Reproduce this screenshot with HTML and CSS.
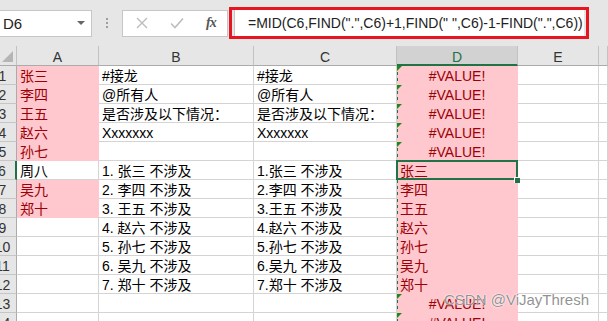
FILE: index.html
```html
<!DOCTYPE html>
<html lang="zh">
	<head>
		<meta charset="utf-8">
		<title>Excel - MID FIND</title>
		<link rel="stylesheet" href="styles.css">
	</head>
	<body>

		<!-- formula bar -->
		<div class="bar">
			<div class="namebox">
				<span>D6</span>
				<span class="caret"></span>
			</div>
			<div class="grip"><i></i><i></i><i></i></div>
			<div class="btns">
				<svg width="12" height="12" viewBox="0 0 12 12"><path d="M1 1L11 11M11 1L1 11" stroke="#bdbdbd" stroke-width="1.4" fill="none"/></svg>
				<svg width="14" height="12" viewBox="0 0 14 12"><path d="M1 6.5L5 10.5L13 1.5" stroke="#bdbdbd" stroke-width="1.6" fill="none"/></svg>
				<span class="fx">fx</span>
			</div>
			<div class="formula">
				<div class="formula-in">=MID(C6,FIND(".",C6)+1,FIND(" ",C6)-1-FIND(".",C6))</div>
			</div>
		</div>

		<!-- sheet -->
		<div class="sheet">
			<div class="hd corner"></div>
			<div class="hd">A</div>
			<div class="hd">B</div>
			<div class="hd">C</div>
			<div class="hd on">D</div>
			<div class="hd">E</div>
			<div class="hd"></div>

			<div class="rh">1</div><div class="c bad">张三</div><div class="c">#接龙</div><div class="c">#接龙</div><div class="c d err">#VALUE!</div><div class="c"></div><div class="c"></div>
			<div class="rh">2</div><div class="c bad">李四</div><div class="c">@所有人</div><div class="c">@所有人</div><div class="c d err">#VALUE!</div><div class="c"></div><div class="c"></div>
			<div class="rh">3</div><div class="c bad">王五</div><div class="c">是否涉及以下情况：</div><div class="c">是否涉及以下情况：</div><div class="c d err">#VALUE!</div><div class="c"></div><div class="c"></div>
			<div class="rh">4</div><div class="c bad">赵六</div><div class="c">Xxxxxxx</div><div class="c">Xxxxxxx</div><div class="c d err">#VALUE!</div><div class="c"></div><div class="c"></div>
			<div class="rh">5</div><div class="c bad">孙七</div><div class="c"></div><div class="c"></div><div class="c d err">#VALUE!</div><div class="c"></div><div class="c"></div>
			<div class="rh sel-row">6</div><div class="c">周八</div><div class="c">1. 张三 不涉及</div><div class="c">1.张三 不涉及</div><div class="c d sel">张三</div><div class="c"></div><div class="c"></div>
			<div class="rh">7</div><div class="c bad">吴九</div><div class="c">2. 李四 不涉及</div><div class="c">2.李四 不涉及</div><div class="c d">李四</div><div class="c"></div><div class="c"></div>
			<div class="rh">8</div><div class="c bad">郑十</div><div class="c">3. 王五 不涉及</div><div class="c">3.王五 不涉及</div><div class="c d">王五</div><div class="c"></div><div class="c"></div>
			<div class="rh">9</div><div class="c"></div><div class="c">4. 赵六 不涉及</div><div class="c">4.赵六 不涉及</div><div class="c d">赵六</div><div class="c"></div><div class="c"></div>
			<div class="rh">10</div><div class="c"></div><div class="c">5. 孙七 不涉及</div><div class="c">5.孙七 不涉及</div><div class="c d">孙七</div><div class="c"></div><div class="c"></div>
			<div class="rh">11</div><div class="c"></div><div class="c">6. 吴九 不涉及</div><div class="c">6.吴九 不涉及</div><div class="c d">吴九</div><div class="c"></div><div class="c"></div>
			<div class="rh">12</div><div class="c"></div><div class="c">7. 郑十 不涉及</div><div class="c">7.郑十 不涉及</div><div class="c d">郑十</div><div class="c"></div><div class="c"></div>
			<div class="rh">13</div><div class="c"></div><div class="c"></div><div class="c"></div><div class="c d err">#VALUE!</div><div class="c"></div><div class="c"></div>
			<div class="rh">14</div><div class="c"></div><div class="c"></div><div class="c"></div><div class="c d err">#VALUE!</div><div class="c"></div><div class="c"></div>
		</div>

		<div class="mark">CSDN @ViJayThresh</div>

	</body>
</html>
```

FILE: styles.css
```css
body {
	margin: 0;
	overflow: hidden;
	background: #fff;
	font-family: "Liberation Sans", "Noto Sans CJK SC", sans-serif;
	font-size: 14px;
	color: #000;
}

/* formula bar */
.bar {
	height: 46px;
	background: #e6e6e6;
	display: flex;
	align-items: center;
}
.namebox {
	width: 96px;
	height: 27px;
	margin-left: -4px;
	padding-left: 6px;
	box-sizing: border-box;
	background: #fff;
	border: 1px solid #c6c6c6;
	display: flex;
	align-items: center;
	justify-content: space-between;
	font-size: 15px;
	color: #222;
}
.caret {
	width: 0;
	height: 0;
	margin-right: 6px;
	border-left: 4px solid transparent;
	border-right: 4px solid transparent;
	border-top: 4px solid #666;
}
.grip {
	width: 2px;
	margin: 0 14px 0 14px;
	display: flex;
	flex-direction: column;
	gap: 2px;
}
.grip i {
	display: block;
	width: 2px;
	height: 2px;
	background: #9e9e9e;
}
.btns {
	width: 106px;
	height: 27px;
	box-sizing: border-box;
	background: #fff;
	border: 1px solid #c6c6c6;
	display: flex;
	align-items: center;
	padding-left: 13px;
	gap: 22px;
}
.fx {
	font-family: "Liberation Serif", serif;
	font-style: italic;
	font-weight: bold;
	font-size: 14px;
	color: #555;
	letter-spacing: -1px;
}
.formula {
	margin-left: 1px;
	width: 360px;
	height: 32px;
	box-sizing: border-box;
	border: 3px solid #e8141f;
	padding: 0 2px 0 2px;
	background: #e6e6e6;
	display: flex;
}
.formula-in {
	flex: 1;
	background: #fff;
	border-left: 1px solid #c6c6c6;
	padding-left: 13px;
	line-height: 26px;
	font-size: 14px;
	color: #222;
	white-space: nowrap;
	overflow: hidden;
}

/* sheet */
.sheet {
	margin-left: -11px;
	display: grid;
	grid-template-columns: 28px 82px 155px 143px 121px 81px 1fr;
	grid-template-rows: 20px;
	grid-auto-rows: 19px;
}
.hd {
	background: #e6e6e6;
	border-right: 1px solid #c2c2c2;
	border-bottom: 1px solid #ababab;
	box-sizing: border-box;
	text-align: center;
	line-height: 18px;
	padding-top: 2px;
	color: #333;
}
.hd.on {
	background: #d2d2d2;
	border-bottom: 2px solid #217346;
	color: #217346;
}
.corner {
	position: relative;
}
.corner::after {
	content: "";
	position: absolute;
	right: 3px;
	bottom: 3px;
	border-left: 11px solid transparent;
	border-bottom: 11px solid #b5b5b5;
}
.rh {
	background: #e6e6e6;
	border-right: 1px solid #ababab;
	border-bottom: 1px solid #c6c6c6;
	box-sizing: border-box;
	text-align: center;
	line-height: 18px;
	padding-top: 1px;
	color: #333;
}
.rh.sel-row {
	border-right: 2px solid #217346;
}
.c {
	border-right: 1px solid #d4d4d4;
	border-bottom: 1px solid #d4d4d4;
	box-sizing: border-box;
	padding: 1px 0 0 3px;
	line-height: 18px;
	white-space: nowrap;
	position: relative;
}
.bad {
	background: #ffc7ce;
	border-color: #ffc7ce;
	color: #9c0006;
}
.d {
	background: linear-gradient(#217346 50%, transparent 0) 0 0 / 1px 6px repeat-y, #ffc7ce;
	border-color: #ffc7ce;
	color: #9c0006;
}
.err {
	text-align: center;
	padding-left: 0;
}
.err::before {
	content: "";
	position: absolute;
	left: 0;
	top: 0;
	border-top: 5px solid #1b8a1b;
	border-right: 5px solid transparent;
}
.sel::after {
	content: "";
	position: absolute;
	left: -1px;
	top: -1px;
	right: -1px;
	bottom: -1px;
	border: 2px solid #217346;
}
.sel::before {
	content: "";
	position: absolute;
	right: -3px;
	bottom: -4px;
	width: 5px;
	height: 5px;
	background: #217346;
	border-left: 1px solid #fff;
	border-top: 1px solid #fff;
	z-index: 1;
}

/* watermark */
.mark {
	position: absolute;
	left: 444px;
	top: 291px;
	font-size: 15px;
	color: rgba(110, 110, 110, 0.75);
	text-shadow: 0 0 2px #fff, 0 0 1px #fff;
	white-space: nowrap;
}
```
